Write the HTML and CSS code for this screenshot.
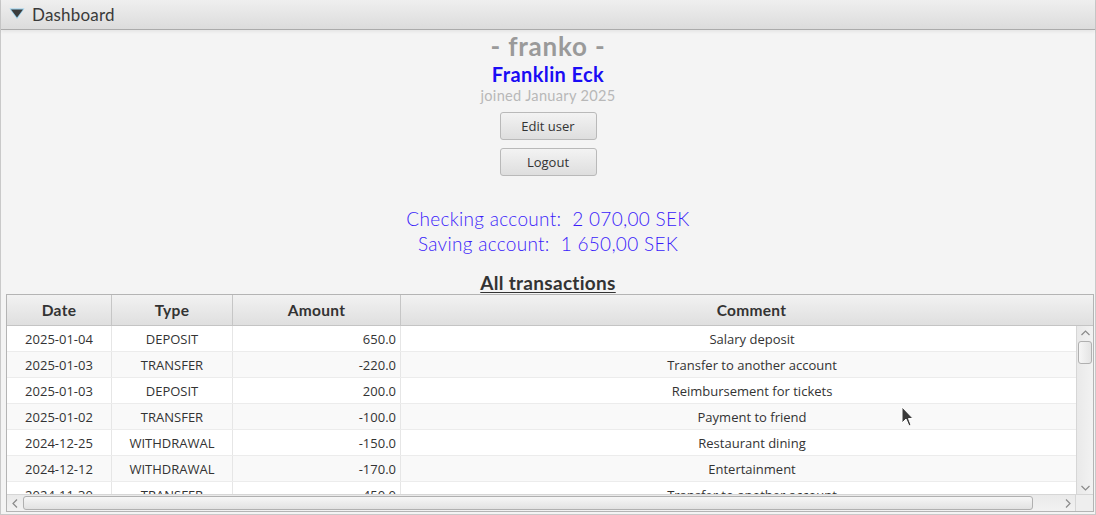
FILE: index.html
```html
<!DOCTYPE html>
<html>
<head>
<meta charset="utf-8">
<link rel="stylesheet" href="styles.css">
</head>
<body>
<div class="window">
  <div class="titlebar">
    <svg class="arrow" width="18" height="16" viewBox="0 0 18 16">
      <polygon points="1.5,2.5 16.5,2.5 9,13" fill="#5fc0f0" opacity="0.6"/>
      <polygon points="3,3.5 15,3.5 9,11.5" fill="#3c3c3c"/>
    </svg>
    <span class="title">Dashboard</span>
  </div>
  <div class="content">
    <div class="username">- franko -</div>
    <div class="fullname">Franklin Eck</div>
    <div class="joined">joined January 2025</div>
    <button class="btn btn-edit">Edit user</button>
    <button class="btn btn-logout">Logout</button>
    <div class="balance first">Checking account:&nbsp; 2 070,00 SEK</div>
    <div class="balance">Saving account:&nbsp; 1 650,00 SEK</div>
    <div class="section-title">All transactions</div>
    <div class="table">
      <div class="thead">
        <div class="th">Date</div>
        <div class="th">Type</div>
        <div class="th">Amount</div>
        <div class="th">Comment</div>
      </div>
      <div class="tbody">
        <div class="rows">
          <div class="row"><div class="td c">2025-01-04</div><div class="td c">DEPOSIT</div><div class="td r">650.0</div><div class="td c last">Salary deposit</div></div>
          <div class="row odd"><div class="td c">2025-01-03</div><div class="td c">TRANSFER</div><div class="td r">-220.0</div><div class="td c last">Transfer to another account</div></div>
          <div class="row"><div class="td c">2025-01-03</div><div class="td c">DEPOSIT</div><div class="td r">200.0</div><div class="td c last">Reimbursement for tickets</div></div>
          <div class="row odd"><div class="td c">2025-01-02</div><div class="td c">TRANSFER</div><div class="td r">-100.0</div><div class="td c last">Payment to friend</div></div>
          <div class="row"><div class="td c">2024-12-25</div><div class="td c">WITHDRAWAL</div><div class="td r">-150.0</div><div class="td c last">Restaurant dining</div></div>
          <div class="row odd"><div class="td c">2024-12-12</div><div class="td c">WITHDRAWAL</div><div class="td r">-170.0</div><div class="td c last">Entertainment</div></div>
          <div class="row"><div class="td c">2024-11-30</div><div class="td c">TRANSFER</div><div class="td r">-450.0</div><div class="td c last">Transfer to another account</div></div>
        </div>
        <div class="vscroll">
          <svg class="sarrow" width="15" height="12" viewBox="0 0 15 12"><polyline points="3.5,8 7.5,4 11.5,8" fill="none" stroke="#8a8a8a" stroke-width="1.2"/></svg>
          <div class="vthumb"></div>
          <div class="vspacer"></div>
          <svg class="sarrow" width="15" height="12" viewBox="0 0 15 12"><polyline points="3.5,4 7.5,8 11.5,4" fill="none" stroke="#8a8a8a" stroke-width="1.2"/></svg>
        </div>
      </div>
      <div class="hbar">
        <div class="hscroll">
          <svg class="harrow" width="12" height="15" viewBox="0 0 12 15"><polyline points="8,3.5 4,7.5 8,11.5" fill="none" stroke="#8a8a8a" stroke-width="1.2"/></svg>
          <div class="hthumb"></div>
          <div class="hspacer"></div>
          <svg class="harrow" width="12" height="15" viewBox="0 0 12 15"><polyline points="4,3.5 8,7.5 4,11.5" fill="none" stroke="#8a8a8a" stroke-width="1.2"/></svg>
        </div>
        <div class="corner"></div>
      </div>
    </div>
  </div>
  <svg class="cursor" width="16" height="24" viewBox="0 0 16 24">
    <polygon points="1,1 1,17 5,13 8,20 10,19 7.5,12.5 12,12.5" fill="#3a3a3a" stroke="#ffffff" stroke-width="1"/>
  </svg>
</div>
</body>
</html>
```

FILE: styles.css
```css
* { box-sizing: border-box; }
html, body { margin: 0; padding: 0; }
body {
  width: 1096px;
  height: 515px;
  background: #f4f4f4;
  font-family: "Lato", "Open Sans", sans-serif;
  overflow: hidden;
}
.window {
  position: relative;
  width: 1096px;
  height: 515px;
  border: 1px solid #c9c9c9;
  border-top: none;
  display: flex;
  flex-direction: column;
  background: #f4f4f4;
}
.titlebar {
  height: 30px;
  flex: none;
  display: flex;
  align-items: center;
  padding-left: 7px;
  padding-bottom: 1px;
  background: linear-gradient(#efefef, #dcdcdc);
  border-bottom: 1px solid #ababab;
  box-shadow: 0 2px 3px rgba(0,0,0,0.06);
}
.arrow { margin-right: 6px; }
.title {
  font-size: 17px;
  color: #3a3a3a;
  letter-spacing: 0.2px;
}
.content {
  flex: 1;
  display: flex;
  flex-direction: column;
  align-items: center;
}
.username {
  margin-top: 1px;
  line-height: 30px;
  font-size: 26px;
  font-weight: 700;
  color: #9a9a9a;
  letter-spacing: 0.8px;
}
.fullname {
  margin-top: 1px;
  line-height: 24px;
  font-size: 20px;
  font-weight: 700;
  color: #1a0cf4;
  letter-spacing: 0.4px;
}
.joined {
  line-height: 20px;
  font-size: 14.6px;
  color: #b8b8b8;
  letter-spacing: 0.3px;
}
.btn {
  width: 97px;
  height: 28px;
  padding: 0;
  border: 1px solid #b9b9b9;
  border-radius: 3px;
  background: linear-gradient(#f3f3f3, #dedede);
  font-family: "Open Sans", sans-serif;
  font-size: 13px;
  color: #333;
}
.btn-edit { margin-top: 6px; }
.btn-logout { margin-top: 8px; }
.balance {
  line-height: 25px;
  font-size: 19px;
  color: #3a1cfa;
  font-weight: 300;
  letter-spacing: 0.3px;
}
.balance.first { margin-top: 30px; }
.section-title {
  margin-top: 16px;
  line-height: 22px;
  font-size: 19px;
  font-weight: 700;
  color: #333;
  text-decoration: underline;
  text-underline-offset: 2px;
  letter-spacing: 0.3px;
}
.table {
  align-self: stretch;
  margin: 0 1px 0 5px;
  height: 218px;
  border: 1px solid #b4b4b4;
  display: flex;
  flex-direction: column;
  background: #fff;
  overflow: hidden;
}
.thead {
  display: grid;
  grid-template-columns: 105px 121px 168px 702px;
  height: 31px;
  flex: none;
  background: linear-gradient(#f2f2f2, #dfdfdf);
  border-bottom: 1px solid #c4c4c4;
}
.th {
  display: flex;
  align-items: center;
  justify-content: center;
  border-right: 1px solid #c6c6c6;
  font-size: 15.5px;
  font-weight: 700;
  color: #333;
  letter-spacing: 0.3px;
}
.tbody {
  flex: 1;
  display: flex;
  min-height: 0;
}
.rows {
  flex: 1;
  overflow: hidden;
  min-width: 0;
}
.row {
  display: grid;
  grid-template-columns: 105px 121px 168px 702px;
  height: 26px;
  background: #ffffff;
  border-bottom: 1px solid #ececec;
}
.row.odd { background: #f9f9f9; }
.td {
  display: flex;
  align-items: center;
  border-right: 1px solid #e6e6e6;
  font-family: "Open Sans", sans-serif;
  font-size: 13px;
  color: #333;
  white-space: nowrap;
}
.td.c { justify-content: center; }
.td.r { justify-content: flex-end; padding-right: 4px; }
.td.last { border-right: none; }
.vscroll {
  width: 17px;
  flex: none;
  display: flex;
  flex-direction: column;
  align-items: center;
  background: linear-gradient(90deg, #e9e9e9, #f2f2f2);
  border-left: 1px solid #d6d6d6;
}
.sarrow { flex: none; margin-top: 1px; }
.vthumb {
  width: 14px;
  height: 23px;
  margin-top: 2px;
  border: 1px solid #b0b0b0;
  border-radius: 3px;
  background: linear-gradient(90deg, #f6f6f6, #e4e4e4);
}
.vspacer { flex: 1; }
.hbar {
  height: 17px;
  flex: none;
  display: flex;
  border-top: 1px solid #d6d6d6;
}
.hscroll {
  flex: 1;
  display: flex;
  align-items: center;
  background: linear-gradient(#eaeaea, #f2f2f2);
}
.harrow { flex: none; margin-left: 2px; margin-right: 1px; }
.hthumb {
  width: 1010px;
  height: 14px;
  margin-left: 1px;
  border: 1px solid #b0b0b0;
  border-radius: 3px;
  background: linear-gradient(#f6f6f6, #e2e2e2);
}
.hspacer { flex: 1; }
.corner {
  width: 18px;
  background: #eeeeee;
  border-left: 1px solid #d6d6d6;
}
.cursor {
  position: absolute;
  left: 900px;
  top: 406px;
}
```
